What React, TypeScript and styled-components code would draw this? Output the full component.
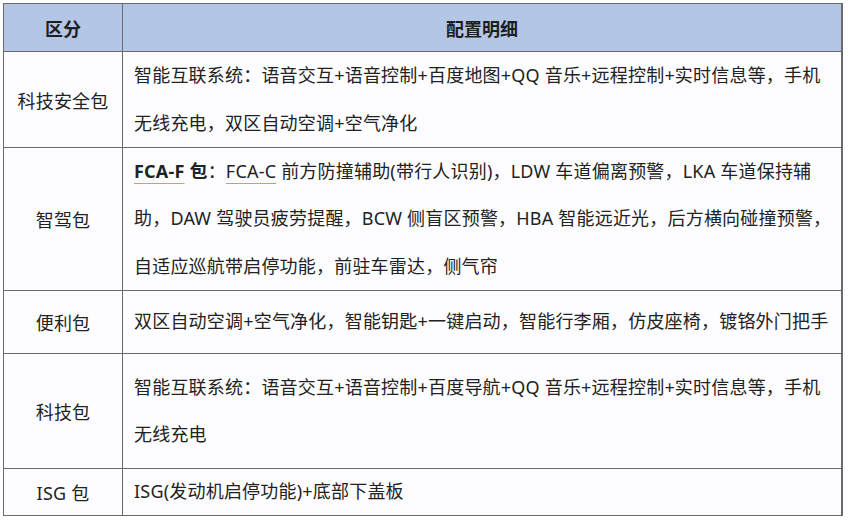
import React from "react";
import styled, { createGlobalStyle } from "styled-components";

interface Row {
  name: string;
  height: number;
  lines: React.ReactNode[];
}

const GlobalStyle = createGlobalStyle`
  body {
    margin: 0;
    background: #ffffff;
  }
`;

const Page = styled.div`
  padding: 3px 0 0 3px;
  font-family: "Noto Sans", "Noto Sans CJK SC", sans-serif;
  color: #222;
`;

const Table = styled.div`
  display: grid;
  grid-template-columns: 118px 718px;
  gap: 1px;
  width: 840px;
  padding: 1px;
  box-sizing: border-box;
  background: #6a6a6a;
`;

const HeadCell = styled.div`
  display: flex;
  align-items: center;
  justify-content: center;
  height: 47px;
  background: #b4c6e6;
  font-size: 18px;
  font-weight: 700;
  color: #1e1e1e;
`;

const NameCell = styled.div<{ $height: number }>`
  display: flex;
  align-items: center;
  justify-content: center;
  height: ${(p) => p.$height}px;
  background: #fdfdff;
  font-size: 18px;
  letter-spacing: 0.2px;
`;

const DetailCell = styled.div<{ $height: number }>`
  display: flex;
  flex-direction: column;
  justify-content: center;
  height: ${(p) => p.$height}px;
  padding-left: 11px;
  background: #fdfdff;
  font-size: 18px;
  letter-spacing: 0.2px;
`;

const Line = styled.div`
  line-height: 47.5px;
  white-space: nowrap;
`;

const Strong = styled.span`
  font-weight: 700;
`;

// the red spell-check underline seen under the codes
const Flagged = styled.span<{ $bold?: boolean }>`
  font-weight: ${(p) => (p.$bold ? 700 : 400)};
  text-decoration: underline;
  text-decoration-color: #e8906f;
  text-decoration-thickness: 1px;
  text-underline-offset: 5px;
`;

const getRows = (): Row[] => [
  {
    name: "科技安全包",
    height: 95,
    lines: [
      "智能互联系统：语音交互+语音控制+百度地图+QQ 音乐+远程控制+实时信息等，手机",
      "无线充电，双区自动空调+空气净化",
    ],
  },
  {
    name: "智驾包",
    height: 142,
    lines: [
      <>
        <Flagged $bold>FCA-F</Flagged>
        <Strong> 包</Strong>：<Flagged>FCA-C</Flagged> 前方防撞辅助(带行人识别)，LDW 车道偏离预警，LKA 车道保持辅
      </>,
      "助，DAW 驾驶员疲劳提醒，BCW 侧盲区预警，HBA 智能远近光，后方横向碰撞预警，",
      "自适应巡航带启停功能，前驻车雷达，侧气帘",
    ],
  },
  {
    name: "便利包",
    height: 62,
    lines: ["双区自动空调+空气净化，智能钥匙+一键启动，智能行李厢，仿皮座椅，镀铬外门把手"],
  },
  {
    name: "科技包",
    height: 114,
    lines: [
      "智能互联系统：语音交互+语音控制+百度导航+QQ 音乐+远程控制+实时信息等，手机",
      "无线充电",
    ],
  },
  {
    name: "ISG 包",
    height: 46,
    lines: ["ISG(发动机启停功能)+底部下盖板"],
  },
];

const App: React.FC = () => {
  const rows = getRows();

  return (
    <Page>
      <GlobalStyle />
      <Table>
        <HeadCell>区分</HeadCell>
        <HeadCell>配置明细</HeadCell>
        {rows.map((row) => (
          <React.Fragment key={row.name}>
            <NameCell $height={row.height}>{row.name}</NameCell>
            <DetailCell $height={row.height}>
              {row.lines.map((line, i) => (
                <Line key={i}>{line}</Line>
              ))}
            </DetailCell>
          </React.Fragment>
        ))}
      </Table>
    </Page>
  );
};

export default App;
